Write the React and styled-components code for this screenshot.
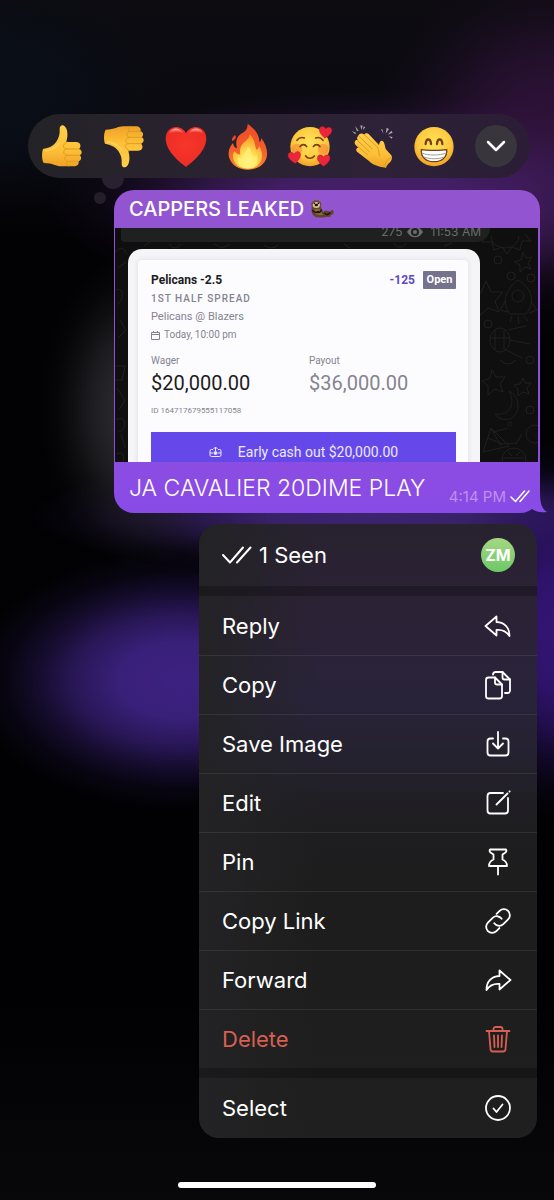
import React from "react";
import styled, { createGlobalStyle } from "styled-components";

const Hand = () => (
  <>
    <path
      d="M6 72 C24 68 36 64 46 50 C54 38 57 28 56 12 C56 -1 67 -2 73 6 C82 18 80 36 76 51 L104 51 C118 50 123 64 114 72 C125 76 124 88 116 91 C124 97 120 108 112 109 C116 118 108 124 98 124 L62 124 C42 124 38 114 8 114 C2 104 2 84 6 72Z"
      fill="url(#skin)"
    />
    <path
      d="M78 51 L72 56 C64 62 66 70 76 72 L114 72 M76 72 C64 75 66 89 78 91 L116 91 M78 91 C68 94 70 107 80 109 L112 109 M80 109 C74 112 75 121 82 123"
      fill="none"
      stroke="#e09a22"
      strokeWidth="3"
      strokeLinecap="round"
    />
    <path d="M14 78 C34 74 48 66 56 54" fill="none" stroke="#ffdc6e" strokeWidth="5" strokeLinecap="round" opacity="0.6" />
  </>
);

const ThumbUp = () => (
  <Emoji viewBox="0 0 126 126">
    <defs>
      <linearGradient id="skin" x1="0" y1="0" x2="0" y2="1">
        <stop offset="0" stopColor="#ffcf4a" />
        <stop offset="0.6" stopColor="#fdc038" />
        <stop offset="1" stopColor="#f0a126" />
      </linearGradient>
    </defs>
    <Hand />
  </Emoji>
);

const ThumbDown = () => (
  <Emoji viewBox="0 0 126 126">
    <g transform="translate(0 128) scale(1 -1)">
      <Hand />
    </g>
  </Emoji>
);

const Heart = () => (
  <Emoji viewBox="0 0 126 126">
    <defs>
      <radialGradient id="heart" cx="0.5" cy="0.45" r="0.65">
        <stop offset="0" stopColor="#f7352b" />
        <stop offset="0.75" stopColor="#ee2f25" />
        <stop offset="1" stopColor="#d81f1c" />
      </radialGradient>
      <linearGradient id="shine" x1="0" y1="0" x2="0" y2="1">
        <stop offset="0" stopColor="#ffb9ae" />
        <stop offset="1" stopColor="#f7352b" stopOpacity="0" />
      </linearGradient>
    </defs>
    <path d="M63 126 C40 108 2 78 2 40 C2 2 48 -6 63 25 C78 -6 124 2 124 40 C124 78 86 108 63 126Z" fill="url(#heart)" />
    <path d="M10 30 C14 6 46 4 56 26 C40 18 24 18 10 30Z" fill="url(#shine)" />
    <path d="M70 26 C80 4 112 6 116 30 C102 18 86 18 70 26Z" fill="url(#shine)" />
  </Emoji>
);

const Fire = () => (
  <Emoji viewBox="0 0 126 126">
    <defs>
      <linearGradient id="flame" x1="0" y1="0" x2="0" y2="1">
        <stop offset="0" stopColor="#ee4a26" />
        <stop offset="0.6" stopColor="#f4602a" />
        <stop offset="1" stopColor="#f98a2a" />
      </linearGradient>
      <radialGradient id="core" cx="0.5" cy="0.8" r="0.7">
        <stop offset="0" stopColor="#fffbd0" />
        <stop offset="0.35" stopColor="#ffe45a" />
        <stop offset="1" stopColor="#fda12c" />
      </radialGradient>
    </defs>
    <path
      d="M62 -4 C92 18 96 34 98 52 C102 48 103 42 102 38 C118 58 124 82 118 100 C110 124 86 134 63 134 C34 134 12 120 6 96 C2 78 8 66 18 54 C20 64 24 68 30 70 C24 44 32 32 46 24 C58 18 62 8 62 -4Z"
      fill="url(#flame)"
    />
    <path d="M24 30 C30 38 24 44 16 48 C12 42 18 36 24 30Z" fill="#f04a26" />
    <path
      d="M68 28 C86 46 82 58 88 74 C94 72 96 66 96 62 C108 82 108 100 100 112 C92 126 78 131 62 131 C44 131 26 124 20 106 C16 94 18 86 22 78 C28 86 34 90 40 88 C36 66 46 56 56 48 C66 40 68 34 68 28Z"
      fill="url(#core)"
    />
    <path d="M62 64 C76 78 70 88 80 96 C86 94 88 90 88 86 C96 106 88 128 62 130 C38 130 28 112 34 96 C40 102 46 102 48 98 C48 84 62 80 62 64Z" fill="#fff072" opacity="0.8" />
  </Emoji>
);

const Face = ({ children }) => (
  <>
    <defs>
      <radialGradient id="face" cx="0.5" cy="0.4" r="0.62">
        <stop offset="0" stopColor="#ffe35c" />
        <stop offset="0.65" stopColor="#fdca3f" />
        <stop offset="1" stopColor="#f19a26" />
      </radialGradient>
    </defs>
    <circle cx="63" cy="65" r="59" fill="url(#face)" />
    {children}
  </>
);

const smallHeart = "M0 18 C-8 12 -19 3 -19 -7 C-19 -18 -5 -20 0 -10 C5 -20 19 -18 19 -7 C19 3 8 12 0 18Z";

const Adore = () => (
  <Emoji viewBox="0 0 126 126">
    <Face>
      <circle cx="24" cy="72" r="16" fill="#f4702e" opacity="0.45" />
      <circle cx="102" cy="72" r="16" fill="#f4702e" opacity="0.45" />
      <g fill="none" stroke="#7a3f12" strokeWidth="5" strokeLinecap="round">
        <path d="M24 46 C30 38 38 36 46 39" />
        <path d="M80 39 C88 36 96 38 102 46" />
        <path d="M33 65 C38 57 48 57 53 65" />
        <path d="M73 65 C78 57 88 57 93 65" />
        <path d="M50 93 C56 102 70 102 76 93" />
      </g>
      <g fill="#e9263a" stroke="#c8152c" strokeWidth="1">
        <path d={smallHeart} transform="translate(109 22) rotate(6)" />
        <path d={smallHeart} transform="translate(17 97) rotate(-8)" />
        <path d={smallHeart} transform="translate(104 106)" />
      </g>
    </Face>
  </Emoji>
);

const Grin = () => (
  <Emoji viewBox="0 0 126 126">
    <Face>
      <g fill="none" stroke="#7a3f12" strokeWidth="7" strokeLinecap="round">
        <path d="M38 57 C39 39 53 39 54 57" />
        <path d="M72 57 C73 39 87 39 88 57" />
      </g>
      <path d="M25 74 C40 77 86 77 101 74 C104 98 84 110 63 110 C42 110 22 98 25 74Z" fill="#fff" stroke="#70401c" strokeWidth="4" />
      <path d="M26 84 C46 92 80 92 100 84 M33 96 C50 103 76 103 93 96" fill="none" stroke="#9b9b9b" strokeWidth="3" />
    </Face>
  </Emoji>
);

const Clap = () => (
  <Emoji viewBox="0 0 126 126">
    <g fill="#a9a7ad">
      <path d="M2 18 L15 23 L13 28Z M12 2 L23 17 L18 19Z M28 1 L35 2 L31 15Z M38 4 L43 7 L36 15Z M90 13 L94 13 L97 26Z M107 8 L114 12 L104 26Z M121 17 L125 23 L110 29Z M113 34 L125 36 L122 41Z" />
    </g>
    <path
      d="M22 32 C25 24 34 23 40 29 C42 23 50 23 55 29 L84 60 C86 50 90 46 95 48 C101 52 101 62 104 72 L122 92 C125 102 120 110 112 116 L104 128 C84 126 66 120 54 108 L20 82 C13 76 15 68 22 68 L14 60 C8 52 12 43 20 45 C17 41 18 36 22 32Z"
      fill="url(#skin)"
    />
    <path d="M24 34 L64 72 M19 46 L56 81 M18 62 L50 90 M40 29 L80 67 C84 76 82 82 86 92 M104 128 C98 114 110 102 122 96" fill="none" stroke="#e09a22" strokeWidth="3" strokeLinecap="round" />
  </Emoji>
);

const Otter = () => (
  <OtterSvg viewBox="0 0 72 54">
    <path d="M6 18 C2 34 6 50 24 52 C38 54 46 50 54 50 C60 52 64 50 62 45 C68 46 73 40 70 32 C66 28 62 32 60 36 C52 30 44 32 40 36 C36 30 34 26 32 18Z" fill="#5f4529" />
    <path d="M14 28 C12 42 22 48 40 44 C34 38 30 32 28 26Z" fill="#8a6a3f" />
    <path d="M8 32 C14 38 22 38 26 34 M34 30 C32 36 28 38 24 38 M44 40 C50 46 56 44 60 38" fill="none" stroke="#20150b" strokeWidth="4" strokeLinecap="round" />
    <ellipse cx="19" cy="13" rx="15" ry="12" fill="#6b4d2d" />
    <ellipse cx="19" cy="15" rx="11" ry="9" fill="#d6bd8b" />
    <circle cx="13" cy="10" r="2.500" fill="#17100a" />
    <circle cx="25" cy="10" r="2.500" fill="#17100a" />
    <ellipse cx="19" cy="15" rx="5" ry="4" fill="#17100a" />
  </OtterSvg>
);

const Wallpaper = () => (
  <WallpaperSvg viewBox="0 0 424 234">
    <g fill="none" stroke="#202020" strokeWidth="1">
      <path d="M377 8 a14 12 0 0 0 28 0 M374 6 l-6 8 10 0 2 8 8 -3 5 7 5 -7 8 3 2 -9 9 0 -6 -7" />
      <circle cx="384" cy="32" r="4" />
      <path d="M409 24 l3 6 6 -1 -4 6 3 6 -6 -2 -5 5 0 -7 -6 -3 7 -2z" />
      <path d="M372 53 l5 11 12 0 -8 9 4 11 -11 -4 -9 8 0 -12 -8 -6 10 -5z" />
      <path d="M404 52 C390 62 388 76 396 86 L412 86 C422 74 418 60 404 52Z M392 72 l-6 10 8 2 M417 74 l6 8 -8 3 M398 88 l-2 6 M404 88 l1 8 M410 88 l4 5" />
      <circle cx="404" cy="68" r="6" />
      <circle cx="397" cy="48" r="4" />
      <circle cx="417" cy="50" r="4" />
      <circle cx="374" cy="96" r="4" />
      <ellipse cx="386" cy="112" rx="10" ry="12" />
      <path d="M381 102 v20 M390 102 v20 M376 110 h20 M394 102 l18 -4 M396 112 l20 4 M392 122 l16 8" />
      <path d="M386 132 q8 8 16 0" />
      <circle cx="416" cy="132" r="4" />
      <path d="M378 142 l4 7 9 0 -5 7 3 8 -8 -3 -7 6 0 -9 -6 -5 8 -3z" />
      <path d="M409 150 l2 5 6 0 -4 5 2 6 -6 -2 -5 4 0 -7 -4 -4 6 -1z" />
      <path d="M395 163 C402 176 396 188 381 186 C388 196 404 192 404 178 C404 170 400 166 395 163Z" />
      <circle cx="416" cy="182" r="4" />
      <path d="M377 200 l-8 24 26 -6z M377 200 l10 18 M374 210 l14 6 M380 204 l14 -4 M388 216 l14 -1" />
      <circle cx="396" cy="196" r="2" />
      <circle cx="421" cy="206" r="9" />
      <circle cx="400" cy="232" r="12" />
      <path d="M390 230 h20 M394 224 l4 4 M406 224 l-4 4 M402 216 l6 -10" />
      <path d="M1 24 q8 -8 12 2 M4 40 l8 -6 M2 62 c8 -4 8 10 2 14 M6 92 l6 10 -8 8 M1 138 h10 l-3 14 -7 0 M3 160 l8 12 -6 10 M2 192 c10 -6 12 8 3 12 M7 206 l4 14 M3 226 c6 -4 8 4 6 8" />
      <path d="M30 18 l6 -4 M56 16 a5 4 0 0 0 10 0 M100 16 l8 4 8 -4 M150 17 q8 6 14 0 M230 16 l6 4 M280 15 a6 4 0 0 0 12 0 M330 18 l8 -3" />
    </g>
  </WallpaperSvg>
);

const icons = {
  reply: <path d="M12.5 4.500 L1.500 14 L12.5 23.500 V18 C18 17.500 22.500 19.500 25.500 24 C25.500 16 21 10.500 12.500 10 Z" />,
  copy: (
    <>
      <path d="M4.500 6.500 H11 L18 13.500 V25 A2.500 2.500 0 0 1 15.500 27.500 H4.500 A2.500 2.500 0 0 1 2 25 V9 A2.500 2.500 0 0 1 4.500 6.500 Z" />
      <path d="M11 6.500 V11.500 A2 2 0 0 0 13 13.500 H18" />
      <path d="M9 3.500 A2.500 2.500 0 0 1 11.500 1 H18.500 L26 8.500 V19.500 A2.500 2.500 0 0 1 23.500 22 H21" />
      <path d="M18.500 1 V6.500 A2 2 0 0 0 20.500 8.500 H26" />
    </>
  ),
  save: (
    <>
      <path d="M9 8.500 H6.500 A3 3 0 0 0 3.500 11.500 V22.500 A3 3 0 0 0 6.500 25.500 H21.500 A3 3 0 0 0 24.500 22.500 V11.500 A3 3 0 0 0 21.500 8.500 H19" />
      <path d="M14 2 V18 M9 13.500 L14 18.500 L19 13.500" />
    </>
  ),
  edit: (
    <>
      <path d="M19 4 H6.500 A3 3 0 0 0 3.500 7 V21.500 A3 3 0 0 0 6.500 24.500 H21 A3 3 0 0 0 24 21.500 V9" />
      <path d="M12.500 15.500 L23.500 4.500 M25.500 2.500 L25.700 2.300" />
    </>
  ),
  pin: <path d="M6 1.500 H22 Q23 3.500 21.500 4.500 L18.500 6.500 V11.500 Q23 13.500 23 18 H5 Q5 13.500 9.500 11.500 V6.500 L6.500 4.500 Q5 3.500 6 1.500 Z M14 18 V26.500" />,
  link: (
    <g transform="translate(14 14) rotate(-45)">
      <path d="M-4.200 -1 A6 6 0 0 0 1.500 6 H8.300 A6 6 0 0 0 8.300 -6 H4" />
      <path d="M4.200 1 A6 6 0 0 0 -1.500 -6 H-8.300 A6 6 0 0 0 -8.300 6 H-4" />
    </g>
  ),
  forward: <path d="M15.500 4.500 L26.500 14 L15.500 23.500 V18 C10 17.500 5.500 19.500 2.500 24 C2.500 16 7 10.500 15.500 10 Z" />,
  trash: (
    <>
      <path d="M2.500 6 H25.500 M9.500 6 V4 A2 2 0 0 1 11.500 2 H16.500 A2 2 0 0 1 18.500 4 V6" />
      <path d="M5 6 L6.500 24 A2.500 2.500 0 0 0 9 26.500 H19 A2.500 2.500 0 0 0 21.500 24 L23 6 M10 10.500 L10.500 22 M14 10.500 V22 M18 10.500 L17.500 22" />
    </>
  ),
  select: (
    <>
      <circle cx="14" cy="14" r="12" />
      <path d="M9.500 14.500 L12.500 18 L18.500 10.500" />
    </>
  ),
};

const actions = [
  { label: "Reply", icon: "reply" },
  { label: "Copy", icon: "copy" },
  { label: "Save Image", icon: "save" },
  { label: "Edit", icon: "edit" },
  { label: "Pin", icon: "pin" },
  { label: "Copy Link", icon: "link" },
  { label: "Forward", icon: "forward" },
  { label: "Delete", icon: "trash", danger: true },
];

const reactions = [
  { name: "Thumbs up", Art: ThumbUp },
  { name: "Thumbs down", Art: ThumbDown },
  { name: "Heart", Art: Heart },
  { name: "Fire", Art: Fire },
  { name: "Adore", Art: Adore },
  { name: "Clap", Art: Clap },
  { name: "Grin", Art: Grin },
];

const MenuItem = ({ label, icon, danger }) => (
  <Item type="button" $danger={danger}>
    {label}
    <ItemIcon viewBox="0 0 28 28" aria-hidden="true">
      {icons[icon]}
    </ItemIcon>
  </Item>
);

const App = () => {
  return (
    <>
      <GlobalStyle />
      <Screen>
        <Reactions>
          {reactions.map(({ name, Art }) => (
            <Reaction key={name} type="button" aria-label={name}>
              <Art />
            </Reaction>
          ))}
          <More type="button" aria-label="More reactions">
            <svg width="20" height="12" viewBox="0 0 20 12" fill="none" stroke="#fff" strokeWidth="2.500" strokeLinecap="round" strokeLinejoin="round">
              <path d="M2 2 L10 10 L18 2" />
            </svg>
          </More>
        </Reactions>

        <Bubble>
          <Sender>
            CAPPERS LEAKED <Otter />
          </Sender>
          <Photo>
            <Wallpaper />
            <Strip>
              275
              <svg width="16" height="12" viewBox="0 0 16 12">
                <path d="M0 6 C4 -1 12 -1 16 6 C12 13 4 13 0 6Z" fill="#6c6c6e" />
                <circle cx="8" cy="6" r="4" fill="#1f2120" />
                <circle cx="8" cy="6" r="2" fill="#6c6c6e" />
              </svg>
              <span>11:53 AM</span>
            </Strip>
            <Receipt>
              <Slip>
                <TopLine>
                  <Team>Pelicans -2.5</Team>
                  <Odds>-125</Odds>
                  <Status>Open</Status>
                </TopLine>
                <Market>1ST HALF SPREAD</Market>
                <Game>Pelicans @ Blazers</Game>
                <Time>
                  <svg width="9" height="9" viewBox="0 0 9 9" fill="none" stroke="#85838f">
                    <path d="M0.500 1.500 H8.500 V8.500 H0.500 Z M0.500 3.500 H8.500 M2.500 0 V2 M6.500 0 V2" />
                  </svg>
                  Today, 10:00 pm
                </Time>
                <Money>
                  <div>
                    <Label>Wager</Label>
                    <Amount>$20,000.00</Amount>
                  </div>
                  <div>
                    <Label>Payout</Label>
                    <Amount $muted>$36,000.00</Amount>
                  </div>
                </Money>
                <BetId>ID 164717679555117058</BetId>
                <CashOut type="button">
                  <svg width="13" height="12" viewBox="0 0 13 12" fill="none" stroke="#ece8ff">
                    <path d="M4 3.500 H2.500 Q1 3.500 1 5 V9 Q1 10.500 2.500 10.500 H10.500 Q12 10.500 12 9 V5 Q12 3.500 10.500 3.500 H9 M6.500 5 V1 M4.500 3 L6.500 1 L8.500 3 M1 7 H4 M9 7 H12" />
                    <circle cx="6.500" cy="7" r="1.500" fill="#ece8ff" />
                  </svg>
                  Early cash out $20,000.00
                </CashOut>
              </Slip>
            </Receipt>
          </Photo>
          <Caption>
            <span>JA CAVALIER 20DIME PLAY</span>
            <Stamp>
              4:14 PM
              <svg width="20" height="13" viewBox="0 0 20 13" fill="none" stroke="#fff" strokeWidth="1.500" strokeLinecap="round" strokeLinejoin="round">
                <path d="M1 7 L5.500 11.500 L14.500 1 M10 11.500 L19 1" />
              </svg>
            </Stamp>
          </Caption>
          <Tail viewBox="0 0 24 22">
            <path d="M0 12 L17 0 C17 11 18 17 24 21 C18 22 12 21 8 17 L0 20Z" fill="#894be6" />
          </Tail>
        </Bubble>

        <Menu>
          <Seen type="button">
            <svg width="30" height="18" viewBox="0 0 30 18" fill="none" stroke="#fff" strokeWidth="2" strokeLinecap="round" strokeLinejoin="round">
              <path d="M1 9 L8 16.500 L21 1.500 M15 16.500 L28.500 1.500" />
            </svg>
            1 Seen
            <Avatar>ZM</Avatar>
          </Seen>
          <Gap />
          {actions.map((a) => (
            <MenuItem key={a.label} {...a} />
          ))}
          <Gap />
          <MenuItem label="Select" icon="select" />
        </Menu>
        <HomeBar />
      </Screen>
    </>
  );
};

export default App;

const GlobalStyle = createGlobalStyle`
  * {
    box-sizing: border-box;
  }
  body {
    margin: 0;
    background-color: #020204;
    font-family: Inter, "Liberation Sans", sans-serif;
  }
  button {
    border: none;
    padding: 0;
    font-family: inherit;
    color: inherit;
    cursor: pointer;
  }
`;

// soft glow that fades out without a visible rim
const glow = (shape, rgb) =>
  `radial-gradient(ellipse ${shape}, rgba(${rgb}, 1) 0%, rgba(${rgb}, 0.92) 30%, rgba(${rgb}, 0.66) 50%, rgba(${rgb}, 0.32) 68%, rgba(${rgb}, 0.1) 84%, rgba(${rgb}, 0) 100%)`;

const Screen = styled.main`
  min-height: 100vh;
  padding: 114px 0 12px;
  display: flex;
  flex-direction: column;
  background:
    ${glow("210px 130px at 180px 680px", "61, 34, 130")},
    ${glow("90px 190px at 100% 630px", "50, 21, 116")},
    ${glow("320px 110px at 370px 200px", "70, 32, 106")},
    ${glow("190px 190px at 100% 150px", "46, 18, 56")},
    ${glow("100px 160px at 140px 410px", "42, 41, 46")},
    ${glow("340px 60px at 370px 516px", "60, 36, 112")},
    ${glow("180px 130px at 0 90px", "9, 14, 23")},
    linear-gradient(#0d0c11 0, #0a0910 130px, #020204 240px, #010103 1000px, #08080b 1200px);
`;

// reactions
const Reactions = styled.div`
  position: relative;
  height: 64px;
  margin: 0 24px 0 28px;
  padding: 0 13px;
  display: flex;
  justify-content: space-between;
  align-items: center;
  border-radius: 32px;
  background: linear-gradient(90deg, #232327 0, #2a2230 35%, #2d2237 70%, #2a1d35 100%);

  &::before {
    content: "";
    position: absolute;
    left: 74px;
    top: 64px;
    width: 22px;
    height: 11px;
    border-radius: 0 0 11px 11px;
    background-color: #29212f;
  }
  &::after {
    content: "";
    position: absolute;
    left: 66px;
    top: 78px;
    width: 12px;
    height: 12px;
    border-radius: 50%;
    background-color: #241e2b;
  }
`;

const Reaction = styled.button`
  width: 42px;
  height: 42px;
  background: none;
`;

const Emoji = styled.svg`
  display: block;
  width: 42px;
  height: 42px;
  overflow: visible;
`;

const More = styled.button`
  width: 42px;
  height: 42px;
  display: flex;
  justify-content: center;
  align-items: center;
  border-radius: 50%;
  background-color: #39353c;
`;

// message
const Bubble = styled.article`
  position: relative;
  margin: 12px 14px 0 114px;
  border-radius: 20px;
  background: linear-gradient(#9355cf 0, #8f52d6 40%, #894be6 100%);
`;

const Sender = styled.div`
  height: 38px;
  padding: 0 15px;
  display: flex;
  align-items: center;
  gap: 6px;
  color: #fff;
  font-size: 20px;
  font-weight: 500;
  white-space: nowrap;
`;

const OtterSvg = styled.svg`
  width: 24px;
  height: 18px;
`;

const Photo = styled.div`
  position: relative;
  height: 234px;
  margin: 0 2px 0 1px;
  overflow: hidden;
  background-color: #0f0f0f;
`;

const WallpaperSvg = styled.svg`
  position: absolute;
  top: 0;
  right: 0;
  width: 424px;
  height: 234px;
`;

const Strip = styled.div`
  position: relative;
  height: 14px;
  margin: 0 48px 0 6px;
  padding: 0 9px 6px 0;
  display: flex;
  justify-content: flex-end;
  align-items: center;
  gap: 4px;
  border-radius: 0 0 14px 4px;
  background-color: #1f2120;
  color: #6c6c6e;
  font-size: 12px;
  line-height: 14px;

  span {
    margin-left: 4px;
  }
`;

const Receipt = styled.div`
  position: relative;
  margin: 7px 58px 0 13px;
  padding: 11px 12px 0 10px;
  border-radius: 14px 14px 0 0;
  background-color: #f5f5f8;
`;

const Slip = styled.div`
  padding: 10px 12px 0 13px;
  border-radius: 4px 4px 0 0;
  background-color: #fcfcff;
  box-shadow: 0 0 5px #d9d9e2;
  color: #85838f;
  font-family: Roboto, sans-serif;
`;

const TopLine = styled.div`
  display: flex;
  align-items: center;
  height: 20px;
`;

const Team = styled.strong`
  flex: 1;
  color: #1b1b20;
  font-size: 12px;
  font-weight: 700;
`;

const Odds = styled.span`
  margin-right: 8px;
  color: #5f48c4;
  font-size: 12px;
  font-weight: 700;
`;

const Status = styled.span`
  width: 33px;
  border-radius: 1px;
  background-color: #74728c;
  color: #fff;
  font-size: 11px;
  font-weight: 700;
  line-height: 18px;
  text-align: center;
`;

const Market = styled.div`
  font-size: 10px;
  font-weight: 500;
  line-height: 18px;
  letter-spacing: 1px;
`;

const Game = styled.div`
  font-size: 11px;
  line-height: 18px;
`;

const Time = styled.div`
  display: flex;
  align-items: center;
  gap: 4px;
  font-size: 10px;
  line-height: 18px;
`;

const Money = styled.div`
  margin-top: 8px;
  display: grid;
  grid-template-columns: 158px 1fr;
`;

const Label = styled.div`
  font-size: 10px;
  line-height: 18px;
`;

const Amount = styled.div`
  color: ${(props) => (props.$muted ? "#85838f" : "#1b1b20")};
  font-size: 20px;
  line-height: 26px;
`;

const BetId = styled.div`
  margin: 6px 0 12px;
  font-size: 8px;
  line-height: 18px;
`;

const CashOut = styled.button`
  width: 100%;
  height: 40px;
  display: flex;
  justify-content: center;
  align-items: center;
  gap: 16px;
  background-color: #6548ea;
  color: #ece8ff;
  font-family: Roboto, sans-serif;
  font-size: 14px;
`;

const Caption = styled.div`
  height: 51px;
  padding: 0 10px 0 15px;
  display: flex;
  justify-content: space-between;
  align-items: center;
  color: #fff;
  font-size: 23px;
  font-weight: 300;
  white-space: nowrap;
`;

const Stamp = styled.span`
  align-self: flex-end;
  padding-bottom: 7px;
  display: flex;
  align-items: center;
  gap: 4px;
  color: #c08ff0;
  font-size: 15px;
  font-weight: 400;
`;

const Tail = styled.svg`
  position: absolute;
  right: -7px;
  bottom: 0;
  width: 24px;
  height: 22px;
`;

// menu
const Menu = styled.div`
  align-self: flex-end;
  width: 338px;
  margin: 11px 17px 0 0;
  overflow: hidden;
  border-radius: 20px;
  background:
    linear-gradient(90deg, #232325 0, transparent 35%),
    linear-gradient(#28222f 0, #2c2236 90px, #29233a 170px, #252230 230px, #1e1d1f 300px, #1d1d1d 420px, #1f1f1f 100%);
`;

const Item = styled.button`
  width: 100%;
  height: 59px;
  padding: 0 25px 0 23px;
  display: flex;
  justify-content: space-between;
  align-items: center;
  background: none;
  color: ${(props) => (props.$danger ? "#d65f52" : "#fff")};
  font-size: 22px;

  & + & {
    border-top: 1px solid #ffffff14;
  }
  &:last-child {
    height: 60px;
  }
`;

const ItemIcon = styled.svg`
  width: 28px;
  height: 28px;
  overflow: visible;
  fill: none;
  stroke: currentColor;
  stroke-width: 1.8;
  stroke-linecap: round;
  stroke-linejoin: round;
`;

const Seen = styled.button`
  width: 100%;
  height: 62px;
  padding: 0 22px 0 23px;
  display: flex;
  align-items: center;
  gap: 7px;
  background: none;
  color: #fff;
  font-size: 22px;
`;

const Avatar = styled.span`
  width: 34px;
  height: 34px;
  margin-left: auto;
  border-radius: 50%;
  background: linear-gradient(#a5d883, #6cc867);
  font-size: 16px;
  font-weight: 700;
  line-height: 34px;
  text-align: center;
`;

const Gap = styled.div`
  height: 10px;
  background-color: #0000003d;
`;

const HomeBar = styled.div`
  width: 198px;
  height: 6px;
  margin: auto auto 0;
  border-radius: 3px;
  background-color: #fff;
`;
